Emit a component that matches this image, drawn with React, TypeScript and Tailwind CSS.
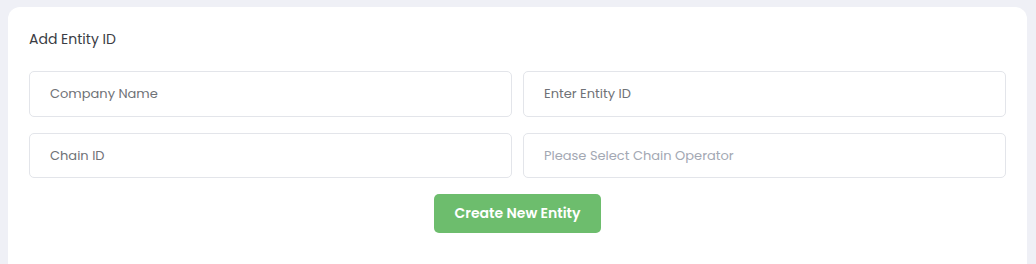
import React from "react";

export default function App() {
  const font = { fontFamily: "Poppins, 'Open Sans', 'Noto Sans', sans-serif" };
  return (
    <div className="w-[1036px] h-[264px] bg-[#eff0f6] pt-[7px] pl-[8px] pr-[9px] overflow-hidden" style={font}>
      <div className="bg-white rounded-t-[12px] h-[257px] pt-[22px] px-[21px]">
        <div className="text-[14px] leading-[20px] text-[#3a3d44]">Add Entity ID</div>
        <div className="grid grid-cols-2 gap-x-[11px] gap-y-[16px] mt-[22px]">
          <div className="h-[46px] border border-[#e3e5ea] rounded-[5px] flex items-center px-[20px] text-[13px] text-[#6f7277]">Company Name</div>
          <div className="h-[46px] border border-[#e3e5ea] rounded-[5px] flex items-center px-[20px] text-[13px] text-[#6f7277]">Enter Entity ID</div>
          <div className="h-[45px] border border-[#e3e5ea] rounded-[5px] flex items-center px-[20px] text-[13px] text-[#6f7277]">Chain ID</div>
          <div className="h-[45px] border border-[#e3e5ea] rounded-[5px] flex items-center px-[20px] text-[13px] text-[#a3a8b3]">Please Select Chain Operator</div>
        </div>
        <div className="flex justify-center mt-[16px]">
          <button className="w-[167px] h-[39px] rounded-[5px] bg-[#6dbd6d] text-white text-[14px] font-semibold">Create New Entity</button>
        </div>
      </div>
    </div>
  );
}
